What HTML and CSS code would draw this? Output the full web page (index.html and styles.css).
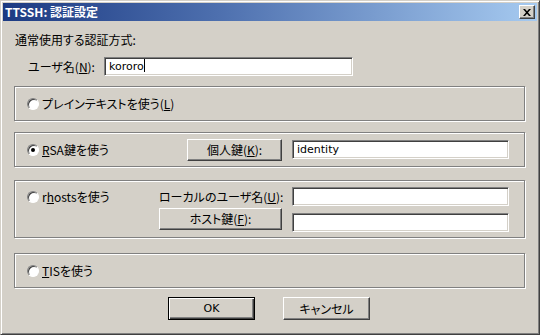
FILE: index.html
```html
<!DOCTYPE html>
<html lang="ja">
<head>
  <meta charset="UTF-8" />
  <title>TTSSH: 認証設定</title>
  <link rel="stylesheet" href="styles.css">
</head>
<body>
  <div class="window">
    <!-- Title bar -->
    <div class="titlebar">
      <span class="title">TTSSH: 認証設定</span>
      <button class="close-btn">
        <svg width="8" height="7" viewBox="0 0 8 7"><path d="M0 0h2l2 2.2L6 0h2L5 3.5 8 7H6L4 4.8 2 7H0l3-3.5z" fill="#000"/></svg>
      </button>
    </div>

    <!-- Dialog body -->
    <div class="content">
      <div class="heading">通常使用する認証方式:</div>

      <div class="user-row">
        <label class="user-label">ユーザ名(<u>N</u>):</label>
        <div class="field user-field">kororo<span class="caret"></span></div>
      </div>

      <div class="group group-plain">
        <label class="radio"><span class="dot"></span><span>プレインテキストを使う(<u>L</u>)</span></label>
      </div>

      <div class="group group-rsa">
        <label class="radio"><span class="dot checked"></span><span><u>R</u>SA鍵を使う</span></label>
        <div class="right">
          <button class="btn key-btn">個人鍵(<u>K</u>):</button>
          <div class="field">identity</div>
        </div>
      </div>

      <div class="group group-rhosts">
        <label class="radio"><span class="dot"></span><span>r<u>h</u>ostsを使う</span></label>
        <div class="rhosts-grid">
          <span class="local-label">ローカルのユーザ名(<u>U</u>):</span>
          <div class="field"></div>
          <button class="btn host-btn">ホスト鍵(<u>F</u>):</button>
          <div class="field host-field"></div>
        </div>
      </div>

      <div class="group group-tis">
        <label class="radio"><span class="dot"></span><span><u>T</u>ISを使う</span></label>
      </div>

      <div class="actions">
        <button class="btn default-btn"><span>OK</span></button>
        <button class="btn action-btn">キャンセル</button>
      </div>
    </div>
  </div>
</body>
</html>
```

FILE: styles.css
```css
* {
  margin: 0;
  padding: 0;
  box-sizing: border-box;
}

body {
  width: 540px;
  height: 335px;
  background: #d4d0c8;
  font-family: "Noto Sans CJK JP", "Liberation Sans", sans-serif;
  font-size: 12px;
  font-feature-settings: "palt";
  color: #000;
  overflow: hidden;
}

.window {
  width: 540px;
  height: 335px;
  padding: 2px;
  border: 1px solid;
  border-color: #d4d0c8 #404040 #404040 #d4d0c8;
  box-shadow: inset 1px 1px #fff, inset -1px -1px #808080;
  background: #d4d0c8;
}

/* Title bar */
.titlebar {
  height: 18px;
  display: flex;
  align-items: center;
  justify-content: space-between;
  padding: 0 2px 0 2px;
  background: linear-gradient(to right, #1c3a82 0%, #4d6fae 40%, #a6caf0 100%);
}

.title {
  color: #fff;
  font-weight: 700;
  font-size: 12px;
  line-height: 14px;
}

.close-btn {
  width: 16px;
  height: 14px;
  display: flex;
  align-items: center;
  justify-content: center;
  background: #d4d0c8;
  border: 1px solid;
  border-color: #fff #404040 #404040 #fff;
  box-shadow: inset -1px -1px #808080;
}

/* Body */
.content {
  padding: 0 11px 0 11px;
}

.heading {
  margin-top: 12px;
  padding-left: 1px;
  line-height: 14px;
}

.user-row {
  display: flex;
  align-items: center;
  margin-top: 10px;
}

.user-label {
  width: 76px;
  margin-left: 14px;
}

.field {
  height: 19px;
  width: 217px;
  background: #fff;
  border: 1px solid;
  border-color: #808080 #fff #fff #808080;
  box-shadow: inset 1px 1px #404040, inset -1px -1px #d4d0c8;
  padding: 1px 4px 0;
  font-family: "DejaVu Sans", "Noto Sans CJK JP", sans-serif;
  font-size: 11px;
  line-height: 16px;
}

.user-field {
  width: 249px;
}

.caret {
  display: inline-block;
  width: 1px;
  height: 13px;
  background: #000;
  vertical-align: -2px;
}

/* Group boxes */
.group {
  width: 511px;
  height: 35px;
  display: flex;
  align-items: center;
  padding: 0 15px 0 12px;
  border: 1px solid #808080;
  box-shadow: inset 1px 1px #fff, 1px 1px #fff;
}

.group-plain { margin-top: 10px; }
.group-rsa { margin-top: 11px; }

.group-rhosts {
  margin-top: 13px;
  height: 58px;
  align-items: flex-start;
  padding-top: 6px;
}

.group-tis { margin-top: 15px; }

.radio {
  display: flex;
  align-items: center;
  gap: 3px;
  flex: 1;
  white-space: nowrap;
}

.group-rhosts .radio {
  height: 19px;
}

.dot {
  width: 12px;
  height: 12px;
  border-radius: 50%;
  background: #fff;
  border: 1px solid;
  border-color: #808080 #fff #fff #808080;
  box-shadow: inset 1px 1px #404040;
  position: relative;
}

.dot.checked::after {
  content: "";
  position: absolute;
  left: 3px;
  top: 3px;
  width: 4px;
  height: 4px;
  border-radius: 50%;
  background: #000;
}

.right {
  display: flex;
  align-items: center;
  gap: 10px;
}

/* Buttons */
.btn {
  height: 22px;
  background: #d4d0c8;
  border: 1px solid;
  border-color: #fff #404040 #404040 #fff;
  box-shadow: inset -1px -1px #808080;
  font-family: inherit;
  font-size: 12px;
  font-feature-settings: "palt";
  color: #000;
  line-height: 18px;
}

.key-btn {
  width: 95px;
}

.rhosts-grid {
  display: grid;
  grid-template-columns: 124px 217px;
  column-gap: 9px;
  row-gap: 2px;
  align-items: start;
}

.local-label {
  line-height: 19px;
  text-align: right;
  white-space: nowrap;
}

.host-btn {
  width: 123px;
}

.host-field {
  margin-top: 5px;
}

/* Bottom buttons */
.actions {
  display: flex;
  justify-content: center;
  gap: 28px;
  margin-top: 9px;
  padding-right: 2px;
}

.action-btn,
.default-btn {
  width: 87px;
  height: 23px;
}

.default-btn {
  border: 1px solid #000;
  box-shadow: inset 1px 1px #fff, inset -1px -1px #404040, inset -2px -2px #808080;
  font-family: "DejaVu Sans", sans-serif;
  font-size: 11px;
}
```
